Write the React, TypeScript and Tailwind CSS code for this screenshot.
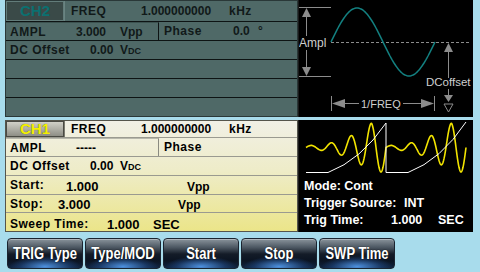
const sinePath = () => {
  const pts: string[] = []
  for (let x = 32; x <= 136; x++) {
    const y = 42 - 34 * Math.sin((2 * Math.PI * (x - 32)) / 104)
    pts.push(`${x === 32 ? 'M' : 'L'}${x} ${y.toFixed(1)}`)
  }
  return pts.join(' ')
}

// amplitude sweep, repeated twice
const chirpPath = () => {
  const pts: string[] = []
  for (const x0 of [7, 87]) {
    for (let s = 0; s <= 80; s += 0.5) {
      const a = Math.min(24.5, 2 + 22 * Math.pow(s / 65, 2.2))
      const y = 27.5 - a * Math.cos((2 * Math.PI * (s - 5)) / 20)
      pts.push(`${pts.length === 0 ? 'M' : 'L'}${(x0 + s).toFixed(1)} ${y.toFixed(1)}`)
    }
  }
  return pts.join(' ')
}

const Vdc = () => (
  <span>
    V<span className="text-[9px]">DC</span>
  </span>
)

const ChannelTopPanel = () => (
  <div className="w-[293px] h-full border border-[#2a3838] bg-[#4f6967] flex flex-col text-[12px] font-bold text-[#111919]">
    <div className="h-[21px] flex border-b border-[#0e1414]">
      <div className="w-[58px] h-[20px] bg-[#3a4a48] border border-[#627c7a] flex items-center justify-center text-[15px] text-[#0b7070]">
        CH2
      </div>
      <div className="flex-1 flex items-center pl-[6px] border-l border-[#6a8482]">
        <span className="w-[70px] tracking-[0.5px]">FREQ</span>
        <span className="w-[88px]">1.000000000</span>
        <span className="tracking-[0.5px]">kHz</span>
      </div>
    </div>
    <div className="h-[19px] flex border-b border-[#0e1414]">
      <div className="w-[153px] flex items-center pl-[4px] border-r border-[#0e1414] border-t border-t-[#3c5250]">
        <span className="w-[66px] tracking-[0.5px]">AMPL</span>
        <span className="w-[44px]">3.000</span>
        <span>Vpp</span>
      </div>
      <div className="flex-1 flex items-center pl-[5px]">
        <span className="w-[69px] tracking-[0.5px]">Phase</span>
        <span className="w-[25px]">0.0</span>
        <span>°</span>
      </div>
    </div>
    <div className="h-[19px] flex items-center pl-[4px] border-b border-[#0e1414]">
      <span className="w-[80px] tracking-[0.5px]">DC Offset</span>
      <span className="w-[30px]">0.00</span>
      <Vdc />
    </div>
    <div className="h-[19px] border-b border-[#0e1414]" />
    <div className="h-[19px] border-b border-[#0e1414]" />
    <div className="flex-1" />
  </div>
)

const ChannelBottomPanel = () => (
  <div className="w-[293px] h-full border border-[#55554c] bg-[linear-gradient(to_bottom,#f1f0e6,#eeecc8_45%,#ebe589)] flex flex-col text-[12px] font-bold text-black">
    <div className="h-[17px] flex border-b border-[#9a9a90]">
      <div className="w-[58px] h-[16px] bg-[linear-gradient(to_bottom,#d0d0c8,#8e8e86)] border border-[#4a4a44] flex items-center justify-center text-[15px] text-[#f4f000] [text-shadow:0_0_1px_#555]">
        CH1
      </div>
      <div className="flex-1 flex items-center pl-[6px] border-l border-[#7a7a70]">
        <span className="w-[70px] tracking-[0.5px]">FREQ</span>
        <span className="w-[88px]">1.000000000</span>
        <span className="tracking-[0.5px]">kHz</span>
      </div>
    </div>
    <div className="h-[19px] flex border-b border-[#9a9a90]">
      <div className="w-[153px] flex items-center pl-[4px] border-r border-[#8a8a80] border-t border-t-[#b8b8ac]">
        <span className="w-[66px] tracking-[0.5px]">AMPL</span>
        <span>-----</span>
      </div>
      <div className="flex-1 flex items-center pl-[5px]">
        <span className="tracking-[0.5px]">Phase</span>
      </div>
    </div>
    <div className="h-[19px] flex items-center pl-[4px] border-b border-[#9a9a90]">
      <span className="w-[80px] tracking-[0.5px]">DC Offset</span>
      <span className="w-[30px]">0.00</span>
      <Vdc />
    </div>
    <div className="h-[19px] flex items-center pl-[4px] border-b border-[#9a9a90]">
      <span className="w-[56px] tracking-[0.5px]">Start:</span>
      <span className="w-[121px] text-[13px] pt-[3px]">1.000</span>
      <span className="pt-[3px]">Vpp</span>
    </div>
    <div className="h-[18px] flex items-center pl-[4px] border-b border-[#9a9a90]">
      <span className="w-[48px] tracking-[0.5px]">Stop:</span>
      <span className="w-[120px] text-[13px] pt-[3px]">3.000</span>
      <span className="pt-[3px]">Vpp</span>
    </div>
    <div className="flex-1 flex items-center pl-[4px]">
      <span className="w-[97px] tracking-[0.5px]">Sweep Time:</span>
      <span className="w-[46px] text-[13px] pt-[2px]">1.000</span>
      <span className="text-[13px] pt-[2px]">SEC</span>
    </div>
  </div>
)

const WaveDiagram = () => (
  <div className="w-[175px] h-full bg-black border-l border-[#1a1a1a]">
    <svg width="175" height="117" viewBox="0 0 175 117">
      <g stroke="#8c8c8c" strokeWidth="1" fill="none">
        <line x1="0" y1="7.5" x2="32" y2="7.5" />
        <line x1="0" y1="76.5" x2="32" y2="76.5" />
        <line x1="7.5" y1="14" x2="7.5" y2="36" />
        <line x1="7.5" y1="50" x2="7.5" y2="70" />
        <line x1="32" y1="42.5" x2="172" y2="42.5" strokeDasharray="3 2" />
        <line x1="149.5" y1="50" x2="149.5" y2="78" />
        <line x1="149.5" y1="89" x2="149.5" y2="96" />
        <line x1="32.5" y1="96" x2="32.5" y2="111" />
        <line x1="135.5" y1="96" x2="135.5" y2="111" />
        <line x1="44" y1="103.5" x2="60" y2="103.5" />
        <line x1="104" y1="103.5" x2="123" y2="103.5" />
        <path d="M145 104 L154 104 L149.5 112 Z" />
      </g>
      <g fill="#8c8c8c">
        <path d="M7.5 8 L3 17 L12 17 Z" />
        <path d="M7.5 76 L3 67 L12 67 Z" />
        <path d="M149.5 43 L145 52 L154 52 Z" />
        <path d="M149.5 102 L145 95 L154 95 Z" />
        <path d="M33 103.5 L46 99 L46 108 Z" />
        <path d="M135 103.5 L122 99 L122 108 Z" />
      </g>
      <path d={sinePath()} stroke="#138080" strokeWidth="1.5" fill="none" />
      <g fill="#cfcfcf" fontFamily="'Liberation Sans', Arial, sans-serif">
        <text x="0" y="47" fontSize="12">Ampl</text>
        <text x="127" y="86" fontSize="11.5">DCoffset</text>
        <text x="62" y="108" fontSize="11">1/FREQ</text>
      </g>
    </svg>
  </div>
)

const SweepView = () => (
  <div className="w-[175px] h-full bg-black border-l border-[#1a1a1a] flex flex-col">
    <svg width="175" height="58" viewBox="0 0 175 58">
      <path d={chirpPath()} stroke="#f2e400" strokeWidth="1.6" fill="none" />
      <path
        d="M7 52.5 L29 52.5 Q62 40 87 3 L87 52.5 L109 52.5 Q142 40 167 2"
        stroke="#ffffff"
        strokeWidth="1"
        fill="none"
      />
    </svg>
    <div className="pl-[5px] text-white font-bold text-[12.5px] leading-[17px]">
      <div>Mode: Cont</div>
      <div className="flex">
        <span className="w-[100px]">Trigger Source:</span>
        <span>INT</span>
      </div>
      <div className="flex">
        <span className="w-[87px]">Trig Time:</span>
        <span className="w-[47px]">1.000</span>
        <span>SEC</span>
      </div>
    </div>
  </div>
)

const SoftKey = ({ label }: { label: string }) => (
  <div className="w-[76px] h-[31px] rounded-[4px] border border-[#1b2430] bg-[radial-gradient(ellipse_60%_45%_at_50%_95%,rgba(80,150,230,0.95),rgba(40,90,160,0.4)_55%,transparent_80%),linear-gradient(to_bottom,#8a949c_0%,#4a5560_30%,#141c28_52%,#0b1422_75%,#102440_100%)] shadow-[inset_0_1px_0_rgba(255,255,255,0.35)] flex items-center justify-center">
    <span className="inline-block text-white font-bold text-[13px] scale-y-[1.3] [text-shadow:0_0_1px_#000]">{label}</span>
  </div>
)

export default function App() {
  const keys = ['TRIG Type', 'Type/MOD', 'Start', 'Stop', 'SWP Time']

  return (
    <div className="w-[480px] h-[272px] bg-[#a8dcec] overflow-hidden flex flex-col font-['Liberation_Sans',Arial,sans-serif]">
      <div className="h-[117px] flex pl-[5px]">
        <ChannelTopPanel />
        <WaveDiagram />
      </div>
      <div className="h-[112px] mt-[3px] flex pl-[5px]">
        <ChannelBottomPanel />
        <SweepView />
      </div>
      <div className="mt-[6px] flex gap-[2px] pl-[7px]">
        {keys.map((k) => (
          <SoftKey key={k} label={k} />
        ))}
      </div>
    </div>
  )
}
